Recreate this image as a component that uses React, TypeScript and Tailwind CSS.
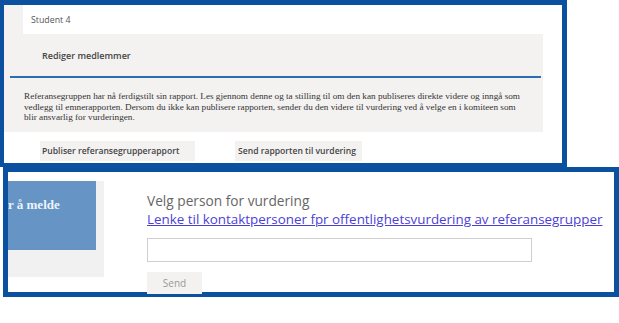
import type { ReactNode } from 'react'

const sans = "font-['Open_Sans','Noto_Sans',sans-serif]"
const serif = "font-['Liberation_Serif','DejaVu_Serif',serif]"

function GrayButton({ children, className }: { children: ReactNode; className?: string }) {
  return (
    <div className={`flex h-[20px] items-center whitespace-nowrap bg-[#f3f2f1] text-[8.6px] font-semibold text-[#444] ${sans} ${className ?? ''}`}>
      {children}
    </div>
  )
}

function ReportPanel() {
  return (
    <div className="flex h-[167px] w-[567px] flex-col border-b-4 border-l-4 border-r-[5px] border-t-[5px] border-[#0b51a0] bg-white">
      <div className="flex h-[29px] shrink-0">
        <div className="w-[19px] bg-[#f3f2f1]" />
        <div className={`flex flex-1 items-center pl-[8px] pt-[2px] text-[8.8px] text-[#555] ${sans}`}>Student 4</div>
      </div>
      <div className="flex h-[98px] w-[539px] shrink-0 flex-col bg-[#f3f2f1]">
        <div className={`flex h-[42px] items-center pl-[38px] pt-[2px] text-[9px] font-semibold text-[#444] ${sans}`}>
          Rediger medlemmer
        </div>
        <div className="ml-[6px] mr-[2px] h-[2px] bg-[#2a6db5]" />
        <p className={`whitespace-nowrap pl-[20px] pt-[13px] text-[9.2px] leading-[10.5px] text-[#333] ${serif}`}>
          Referansegruppen har nå ferdigstilt sin rapport. Les gjennom denne og ta stilling til om den kan publiseres direkte videre og inngå som
          <br />
          vedlegg til emnerapporten. Dersom du ikke kan publisere rapporten, sender du den videre til vurdering ved å velge en i komiteen som
          <br />
          blir ansvarlig for vurderingen.
        </p>
      </div>
      <div className="flex gap-[40px] pl-[36px] pt-[9px]">
        <GrayButton className="w-[155px] pl-[2px]">Publiser referansegrupperapport</GrayButton>
        <GrayButton className="w-[127px] pl-[3px]">Send rapporten til vurdering</GrayButton>
      </div>
    </div>
  )
}

function ReviewPanel() {
  return (
    <div className="ml-[3px] flex h-[130px] w-[616px] border-[5px] border-[#0b51a0] bg-white pt-[9px]">
      <div className="h-[96px] w-[96px] shrink-0 bg-[#f1f1f1]">
        <div className={`flex h-[69px] w-[88px] items-start bg-[#6694c4] pt-[14px] text-[13px] font-bold text-[#eef3fa] ${serif}`}>
          r å melde
        </div>
      </div>
      <div className={`ml-[43px] flex flex-col whitespace-nowrap ${sans}`}>
        <div className="pt-[11px] text-[13.7px] leading-[18px] text-[#666]">Velg person for vurdering</div>
        <a href="#" className="text-[13.4px] leading-[18px] text-[#4b3fd6] underline">
          Lenke til kontaktpersoner fpr offentlighetsvurdering av referansegrupper
        </a>
        <div className="mt-[10px] h-[24px] w-[385px] shrink-0 border border-[#cfcfcf] bg-white" />
        <div className="mt-[10px] flex h-[22px] w-[55px] shrink-0 items-center justify-center bg-[#f3f2f1] text-[10px] text-[#999]">
          Send
        </div>
      </div>
    </div>
  )
}

export default function App() {
  return (
    <div className="h-[323px] w-[619px] overflow-hidden bg-white">
      <ReportPanel />
      <ReviewPanel />
    </div>
  )
}
